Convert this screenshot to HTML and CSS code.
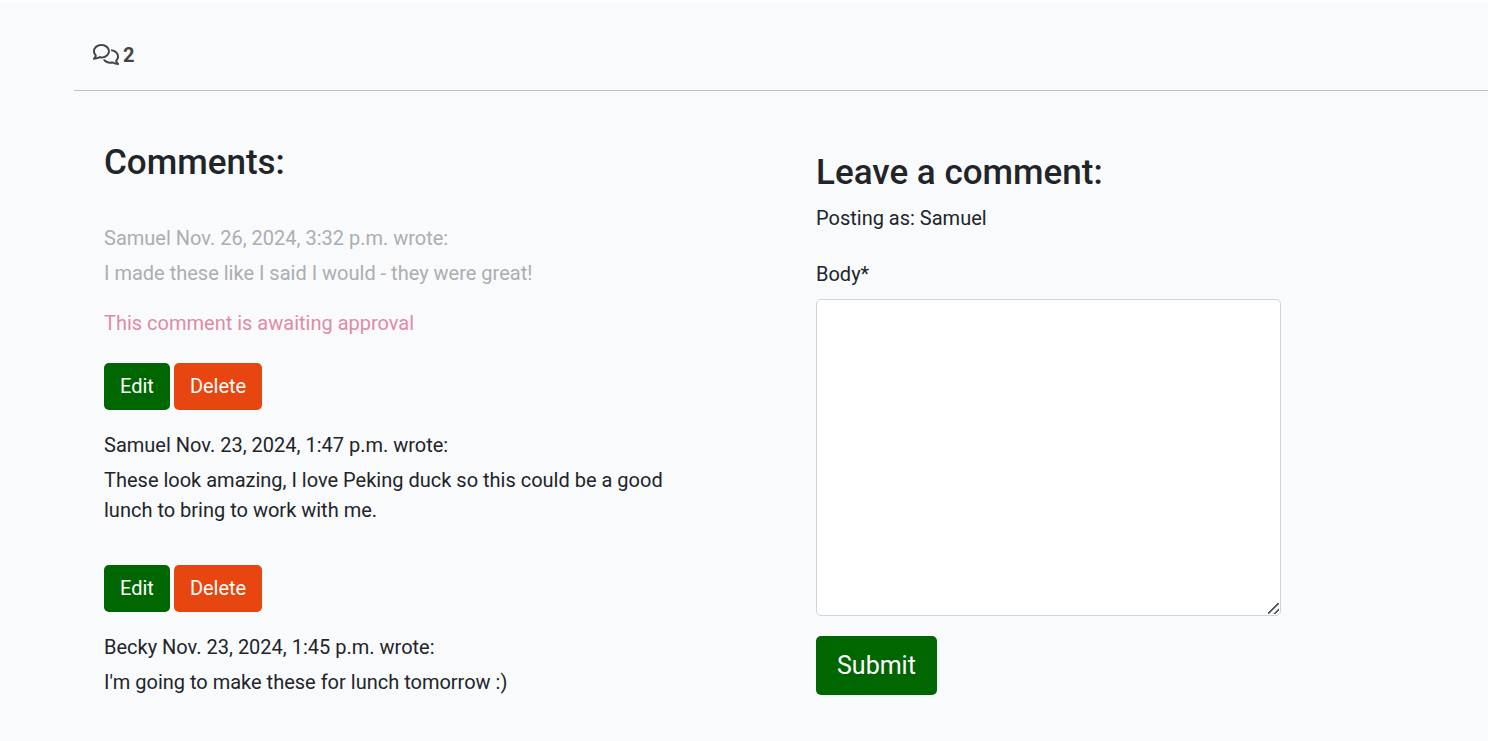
FILE: index.html
```html
<!DOCTYPE html>
<html lang="en">
<head>
<meta charset="utf-8">
<title>Comments</title>
<link rel="stylesheet" href="styles.css">
</head>
<body>
<main class="page">
  <div class="count">
    <svg class="count-icon" viewBox="0 0 640 512" preserveAspectRatio="none" aria-hidden="true"><path d="M88.200 309.100c9.800-18.300 6.800-40.800-7.500-55.800C59.400 230.900 48 204 48 176c0-63.500 63.800-128 160-128s160 64.500 160 128s-63.800 128-160 128c-13.100 0-25.800-1.300-37.800-3.600c-10.400-2-21.200-.6-30.700 4.200c-4.100 2.100-8.300 4.100-12.600 6c-16 7.200-32.900 13.500-49.900 18c2.800-4.600 5.400-9.100 7.900-13.600c1.100-1.900 2.200-3.900 3.200-5.900zM208 352c114.900 0 208-78.800 208-176S322.900 0 208 0S0 78.800 0 176c0 41.800 17.200 80.100 45.900 110.300c-.9 1.700-1.900 3.500-2.800 5.100c-10.300 18.400-22.300 36.500-36.600 52.100c-6.600 7-8.300 17.200-4.600 25.900C5.800 378.300 14.400 384 24 384c43 0 86.500-13.300 122.700-29.700c4.800-2.200 9.600-4.500 14.200-6.800c15.100 3 30.900 4.500 47.100 4.500zM432 480c16.200 0 31.900-1.600 47.100-4.500c4.600 2.300 9.400 4.600 14.200 6.800C529.500 498.700 573 512 616 512c9.600 0 18.200-5.700 22-14.500c3.800-8.800 2-19-4.600-25.900c-14.200-15.600-26.200-33.700-36.600-52.100c-.9-1.700-1.900-3.400-2.800-5.100C622.800 384.100 640 345.800 640 304c0-94.400-87.900-171.500-198.200-175.800c4.100 15.200 6.200 31.200 6.200 47.800l0 .6c87.200 6.700 144 67.500 144 127.400c0 28-11.400 54.900-32.700 77.200c-14.300 15-17.300 37.600-7.500 55.800c1.100 2 2.200 4 3.200 5.900c2.500 4.500 5.200 9 7.900 13.600c-17-4.500-33.900-10.700-49.900-18c-4.300-1.900-8.500-3.900-12.600-6c-9.500-4.800-20.300-6.200-30.700-4.200c-12.100 2.400-24.700 3.600-37.800 3.600c-61.700 0-110-26.500-136.800-62.300c-16 5.400-32.800 9.400-50 11.800C279 439.800 350 480 432 480z"/></svg>
    <strong>2</strong>
  </div>
  <hr class="divider">
  <div class="columns">
    <section class="comments">
      <h2 class="title">Comments:</h2>
      <article class="comment">
        <p class="meta faded">Samuel Nov. 26, 2024, 3:32 p.m. wrote:</p>
        <p class="text faded">I made these like I said I would - they were great!</p>
        <p class="approval">This comment is awaiting approval</p>
        <div class="actions"><button class="btn edit" type="button">Edit</button><button class="btn delete" type="button">Delete</button></div>
      </article>
      <article class="comment">
        <p class="meta">Samuel Nov. 23, 2024, 1:47 p.m. wrote:</p>
        <p class="text">These look amazing, I love Peking duck so this could be a good lunch to bring to work with me.</p>
        <div class="actions spaced"><button class="btn edit" type="button">Edit</button><button class="btn delete" type="button">Delete</button></div>
      </article>
      <article class="comment">
        <p class="meta">Becky Nov. 23, 2024, 1:45 p.m. wrote:</p>
        <p class="text">I'm going to make these for lunch tomorrow :)</p>
      </article>
    </section>
    <form class="form">
      <h2 class="title">Leave a comment:</h2>
      <p class="posting">Posting as: Samuel</p>
      <label class="label" for="body">Body*</label>
      <textarea class="body" id="body" name="body" rows="10" required></textarea>
      <button class="btn submit" type="submit">Submit</button>
    </form>
  </div>
</main>
</body>
</html>
```
FILE: styles.css
```css
* { box-sizing: border-box; }

body {
  margin: 0;
  border-top: 3px solid #fff;
  background: #f9fafc;
  color: #212529;
  font-family: Roboto, sans-serif;
  font-size: 20px;
  line-height: 30px;
}

h2, p { margin: 0; }

.page { padding: 37px 0 44px 74px; }

.count {
  display: flex;
  align-items: center;
  gap: 4px;
  padding-left: 19px;
  color: #444;
}

.count-icon {
  width: 26px;
  height: 21px;
  margin-bottom: 2px;
  fill: currentColor;
}

.divider {
  margin: 20px 0;
  border: 0;
  border-top: 1px solid #c0c1c3;
}

.columns {
  display: grid;
  grid-template-columns: 1fr 1fr;
}

.comments { padding: 30px 94px 0 30px; }

.title {
  font-size: 35px;
  font-weight: 500;
  line-height: 44px;
}

.comments .title { margin-bottom: 38px; }

.comment { margin-bottom: 20px; }

.comment:last-child { margin-bottom: 0; }

.meta { margin-bottom: 5px; }

.faded { color: #acaeaf; }

.approval {
  margin-top: 20px;
  color: #e08ba4;
}

.actions {
  display: flex;
  gap: 4px;
  margin-top: 25px;
}

.spaced { margin-top: 40px; }

.btn {
  padding: 8px 16px;
  border: 0;
  border-radius: 5px;
  background: #060;
  color: #fff;
  font: inherit;
}

.actions .btn { padding: 8px 16px 9px; }

.actions .delete { background: #e84610; }

.form {
  display: flex;
  flex-direction: column;
  align-items: flex-start;
  padding: 40px 207px 0 35px;
}

.form .title { margin-bottom: 8px; }

.posting { margin-bottom: 26px; }

.label { margin-bottom: 10px; }

.body {
  width: 100%;
  height: 317px;
  margin-bottom: 20px;
  padding: 8px 15px;
  border: 1px solid #ced4da;
  border-radius: 5px;
  background: #fff;
  font: inherit;
  resize: vertical;
}

.body::-webkit-resizer {
  background: linear-gradient(135deg, transparent 7px, #555 7px 8px, transparent 9px 11px, #555 12px 13px, transparent 13px) 3px 3px / 11px 11px no-repeat;
}

.submit {
  padding: 10px 21px;
  font-size: 25px;
  line-height: 39px;
}
```
